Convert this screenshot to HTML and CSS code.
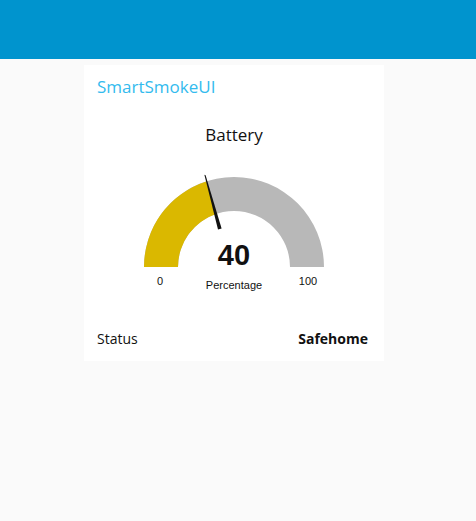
FILE: index.html
```html
<!DOCTYPE html>
<html>
<head>
<meta charset="utf-8">
<link rel="stylesheet" href="styles.css">
</head>
<body>
<header class="topbar"></header>
<main class="content">
  <section class="card">
    <div class="card-title">SmartSmokeUI</div>
    <div class="gauge-title">Battery</div>
    <div class="gauge-wrap">
      <svg class="gauge" width="300" height="130" viewBox="0 0 300 130">
        <path d="M60 102 A90 90 0 0 1 240 102 L206 102 A56 56 0 0 0 94 102 Z" fill="#b8b8b8"/>
        <path d="M60 102 A90 90 0 0 1 122.19 16.41 L132.70 48.74 A56 56 0 0 0 94 102 Z" fill="#dab800"/>
        <polygon points="120.4,9.8 121.6,10.2 137.6,63.4 134.0,64.6" fill="#111"/>
        <text x="150" y="100" class="g-value" text-anchor="middle">40</text>
        <text x="150" y="124" class="g-unit" text-anchor="middle">Percentage</text>
        <text x="76" y="120" class="g-minmax" text-anchor="middle">0</text>
        <text x="224" y="120" class="g-minmax" text-anchor="middle">100</text>
      </svg>
    </div>
    <div class="status-row">
      <span class="status-label">Status</span>
      <span class="status-value">Safehome</span>
    </div>
  </section>
</main>
</body>
</html>
```
FILE: styles.css
```css
html, body {
  margin: 0;
  padding: 0;
  background: #fafafa;
  font-family: "Open Sans", "Noto Sans", sans-serif;
}
.topbar {
  height: 59px;
  background: #0094ce;
}
.content {
  padding: 6px 0 0 84px;
}
.card {
  width: 300px;
  background: #ffffff;
  box-sizing: border-box;
  padding: 11px 0 12px 0;
}
.card-title {
  color: #33bbee;
  font-size: 17px;
  line-height: 22px;
  padding-left: 13px;
}
.gauge-title {
  text-align: center;
  color: #111;
  font-size: 17px;
  line-height: 22px;
  margin-top: 26px;
}
.gauge-wrap {
  display: flex;
  justify-content: center;
  margin-top: 19px;
}
.gauge {
  display: block;
}
.g-value {
  font-family: "Liberation Sans", Arial, sans-serif;
  font-weight: bold;
  font-size: 29px;
  fill: #111;
}
.g-unit, .g-minmax {
  font-family: "Liberation Sans", Arial, sans-serif;
  font-size: 11px;
  fill: #111;
}
.status-row {
  display: flex;
  justify-content: space-between;
  padding: 0 16px 0 13px;
  margin-top: 34px;
  font-size: 14px;
  line-height: 20px;
  color: #111;
}
.status-value {
  font-weight: bold;
}
```
